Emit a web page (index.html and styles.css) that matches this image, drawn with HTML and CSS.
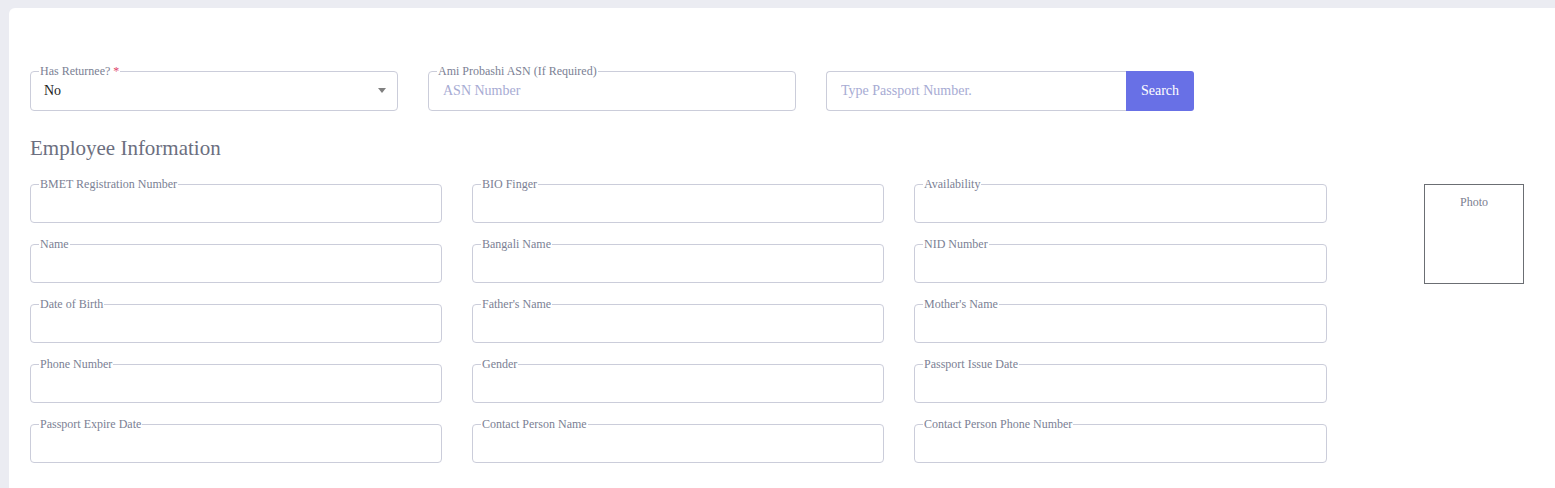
FILE: index.html
```html
<!DOCTYPE html>
<html lang="en">
<head>
<meta charset="utf-8">
<title>Returnee Registration</title>
<link rel="stylesheet" href="styles.css">
</head>
<body>
<main class="card">
  <div class="top-row">
    <fieldset class="field field-wide">
      <legend>Has Returnee? <span class="req">*</span></legend>
      <div class="select">
        <span class="select-value">No</span>
        <span class="caret"></span>
      </div>
    </fieldset>
    <fieldset class="field field-wide">
      <legend>Ami Probashi ASN (If Required)</legend>
      <input class="control" type="text" placeholder="ASN Number">
    </fieldset>
    <div class="search-group">
      <input class="search-input" type="text" placeholder="Type Passport Number.">
      <button class="search-btn" type="button">Search</button>
    </div>
  </div>

  <h2 class="section-title">Employee Information</h2>

  <div class="info">
    <div class="info-grid">
      <fieldset class="field"><legend>BMET Registration Number</legend><input class="control" type="text"></fieldset>
      <fieldset class="field"><legend>BIO Finger</legend><input class="control" type="text"></fieldset>
      <fieldset class="field"><legend>Availability</legend><input class="control" type="text"></fieldset>

      <fieldset class="field"><legend>Name</legend><input class="control" type="text"></fieldset>
      <fieldset class="field"><legend>Bangali Name</legend><input class="control" type="text"></fieldset>
      <fieldset class="field"><legend>NID Number</legend><input class="control" type="text"></fieldset>

      <fieldset class="field"><legend>Date of Birth</legend><input class="control" type="text"></fieldset>
      <fieldset class="field"><legend>Father's Name</legend><input class="control" type="text"></fieldset>
      <fieldset class="field"><legend>Mother's Name</legend><input class="control" type="text"></fieldset>

      <fieldset class="field"><legend>Phone Number</legend><input class="control" type="text"></fieldset>
      <fieldset class="field"><legend>Gender</legend><input class="control" type="text"></fieldset>
      <fieldset class="field"><legend>Passport Issue Date</legend><input class="control" type="text"></fieldset>

      <fieldset class="field"><legend>Passport Expire Date</legend><input class="control" type="text"></fieldset>
      <fieldset class="field"><legend>Contact Person Name</legend><input class="control" type="text"></fieldset>
      <fieldset class="field"><legend>Contact Person Phone Number</legend><input class="control" type="text"></fieldset>
    </div>
    <div class="photo">Photo</div>
  </div>
</main>
</body>
</html>
```

FILE: styles.css
```css
* {
  box-sizing: border-box;
}

html, body {
  margin: 0;
  height: 100%;
}

body {
  background: #ebecf2;
  font-family: "Liberation Serif", "Times New Roman", serif;
  overflow: hidden;
}

.card {
  margin: 8px 0 0 9px;
  min-height: calc(100% - 8px);
  background: #ffffff;
  border-radius: 6px 0 0 0;
  padding: 56px 0 0 21px;
}

/* generic outlined field with a label on its top edge */
.field {
  margin: 0;
  padding: 0 8px 7px;
  border: 1px solid #cbcdda;
  border-radius: 4px;
  min-width: 0;
}

.field legend {
  padding: 0 1px;
  font-size: 12px;
  line-height: 14px;
  color: #7b7f94;
}

.req {
  color: #e0466a;
}

.control {
  display: block;
  width: 100%;
  height: 24px;
  border: 0;
  outline: none;
  padding: 0 0 0 4px;
  font-family: inherit;
  font-size: 14px;
  color: #222;
  background: transparent;
}

.control::placeholder {
  color: #a7abd3;
}

/* top row */
.top-row {
  display: flex;
  align-items: flex-end;
  gap: 30px;
}

.field-wide {
  width: 368px;
}

.field-wide .control {
  height: 25px;
  padding-left: 6px;
}

.select {
  display: flex;
  align-items: center;
  justify-content: space-between;
  height: 25px;
  padding: 0 3px 0 5px;
}

.select-value {
  font-size: 14px;
  color: #1e1e1e;
}

.caret {
  width: 0;
  height: 0;
  border-left: 4px solid transparent;
  border-right: 4px solid transparent;
  border-top: 5px solid #808080;
}

.search-group {
  display: flex;
  width: 368px;
  height: 40px;
}

.search-input {
  flex: 1;
  min-width: 0;
  border: 1px solid #cbcdda;
  border-right: 0;
  border-radius: 4px 0 0 4px;
  padding: 0 14px;
  font-family: inherit;
  font-size: 14px;
  outline: none;
}

.search-input::placeholder {
  color: #a7abd3;
}

.search-btn {
  width: 68px;
  border: 0;
  border-radius: 0 3px 3px 0;
  background: #6870e6;
  color: #ffffff;
  font-family: inherit;
  font-size: 14px;
}

.section-title {
  margin: 25px 0 0;
  font-size: 21px;
  font-weight: normal;
  line-height: 24px;
  color: #6c6f80;
}

/* employee grid plus photo slot */
.info {
  display: flex;
  align-items: flex-start;
  margin-top: 17px;
}

.info-grid {
  display: grid;
  grid-template-columns: 412px 412px 413px;
  column-gap: 30px;
  row-gap: 14px;
}

.photo {
  margin: 7px 0 0 97px;
  width: 100px;
  height: 100px;
  border: 1px solid #6b6e73;
  text-align: center;
  padding-top: 10px;
  font-size: 12px;
  color: #7b7e90;
}
```
